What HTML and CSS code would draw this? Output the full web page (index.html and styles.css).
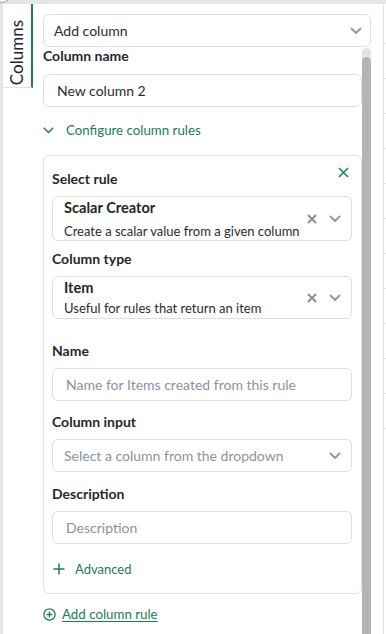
FILE: index.html
```html
<!DOCTYPE html>
<html>
<head>
    <title>Columns</title>
    <link rel="stylesheet" href="styles.css">
</head>
<body>
    <div class="corner-dot"></div>
    <div class="app">
        <div class="tabs">
            <div class="tab"><span>Columns</span></div>
        </div>

        <div class="panel">
            <div class="select top-select">
                <span>Add column</span>
                <svg class="chev" width="12" height="8" viewBox="0 0 12 8"><polyline points="1.5,1.5 6,6 10.5,1.5"/></svg>
            </div>

            <div class="scroll">
                <div class="content">
                    <div class="label">Column name</div>
                    <div class="input">New column 2</div>

                    <div class="toggle">
                        <svg width="11" height="7" viewBox="0 0 11 7"><polyline points="0.8,0.8 5.5,5.5 10.2,0.8"/></svg>
                        <span>Configure column rules</span>
                    </div>

                    <div class="card">
                        <svg class="close" width="11" height="11" viewBox="0 0 11 11"><path d="M1 1L10 10M10 1L1 10"/></svg>

                        <div class="label">Select rule</div>
                        <div class="select rich rule">
                            <div class="value">
                                <strong>Scalar Creator</strong>
                                <span>Create a scalar value from a given column</span>
                            </div>
                            <svg class="clear" width="10" height="10" viewBox="0 0 10 10"><path d="M1 1L9 9M9 1L1 9"/></svg>
                            <svg class="chev" width="12" height="8" viewBox="0 0 12 8"><polyline points="1.5,1.5 6,6 10.5,1.5"/></svg>
                        </div>

                        <div class="label gap-sm">Column type</div>
                        <div class="select rich kind">
                            <div class="value">
                                <strong>Item</strong>
                                <span>Useful for rules that return an item</span>
                            </div>
                            <svg class="clear" width="10" height="10" viewBox="0 0 10 10"><path d="M1 1L9 9M9 1L1 9"/></svg>
                            <svg class="chev" width="12" height="8" viewBox="0 0 12 8"><polyline points="1.5,1.5 6,6 10.5,1.5"/></svg>
                        </div>

                        <div class="label gap-lg">Name</div>
                        <div class="input placeholder">Name for Items created from this rule</div>

                        <div class="label gap-md">Column input</div>
                        <div class="select placeholder">
                            <span>Select a column from the dropdown</span>
                            <svg class="chev" width="12" height="8" viewBox="0 0 12 8"><polyline points="1.5,1.5 6,6 10.5,1.5"/></svg>
                        </div>

                        <div class="label gap-md2">Description</div>
                        <div class="input placeholder">Description</div>

                        <div class="advanced">
                            <svg width="12" height="12" viewBox="0 0 12 12"><path d="M6 0.5V11.5M0.5 6H11.5"/></svg>
                            <span>Advanced</span>
                        </div>
                    </div>

                    <a class="add-rule" href="#">
                        <svg width="13" height="13" viewBox="0 0 13 13"><circle cx="6.5" cy="6.5" r="5.6"/><path d="M6.5 3.6V9.4M3.6 6.5H9.4"/></svg>
                        <span>Add column rule</span>
                    </a>
                </div>

                <div class="scrollbar"><div class="thumb"></div></div>
            </div>
        </div>

        <div class="edge">
            <div class="row first"></div>
            <div class="row"></div>
            <div class="row"></div>
            <div class="row"></div>
            <div class="row"></div>
            <div class="row"></div>
            <div class="row"></div>
            <div class="row"></div>
            <div class="row"></div>
            <div class="row"></div>
            <div class="row"></div>
            <div class="row"></div>
        </div>
    </div>
</body>
</html>
```

FILE: styles.css
```css
* { box-sizing: border-box; }
body { margin: 0; background: #e6e6e8; font-family: Lato, "Noto Sans", sans-serif; font-size: 14px; color: #2b2b2b; overflow: hidden; position: relative; }

/* edge of a round button that peeks in at the top left */
.corner-dot { position: absolute; left: -8px; top: -17px; width: 20px; height: 20px; border-radius: 50%; background: #fff; border: 1px solid #9a9a9a; }

.app { display: flex; margin: 4px 0 0 3px; height: 630px; background: #fff; }

.tabs { width: 30px; flex: none; }
.tab { height: 84px; border-right: 2px solid #1d7a5c; border-bottom: 1px solid #e0e0e0; display: flex; align-items: center; justify-content: center; padding-top: 14px; }
.tab span { writing-mode: vertical-rl; transform: rotate(180deg); font-size: 17px; color: #262626; margin-right: 2px; }

.panel { flex: 1; min-width: 0; padding: 10px 12px 0 10px; display: flex; flex-direction: column; }

.select, .input { border: 1px solid #dedede; border-radius: 6px; background: #fff; display: flex; align-items: center; height: 33px; }
.select { padding: 0 10px 0 11px; }
.select > span, .select .value { flex: 1; min-width: 0; }
.input { padding: 0 13px; }
.top-select { padding: 0 8px 0 10px; }
.placeholder { color: #8d929c; }

.chev { fill: none; stroke: #9a9a9a; stroke-width: 2; stroke-linecap: round; stroke-linejoin: round; }
.clear { fill: none; stroke: #8f8f8f; stroke-width: 2; margin-right: 12px; }

.scroll { flex: 1; display: flex; min-height: 0; overflow: hidden; }
.content { flex: 1; min-width: 0; }
.scrollbar { width: 9px; margin-top: 1px; background: #e3e3e3; border-radius: 5px 5px 0 0; padding-top: 9px; }
.thumb { height: 100%; background: #b4b4b4; border-radius: 5px 5px 0 0; }

.label { font-weight: 700; line-height: 18px; margin-bottom: 9px; color: #262730; }
.card .label { margin-bottom: 8px; }
.gap-sm { margin-top: 9px; }
.gap-md { margin-top: 12px; }
.gap-md2 { margin-top: 13px; }
.gap-lg { margin-top: 23px; }

.toggle, .advanced, .add-rule { display: flex; align-items: center; color: #1d7a5c; line-height: 20px; font-size: 13.3px; }
.toggle { margin-top: 13px; }
.toggle svg { fill: none; stroke: #1d7a5c; stroke-width: 1.4; margin-right: 12px; }

.card { position: relative; margin-top: 15px; border: 1px solid #e2e2e2; border-radius: 6px; padding: 14px 9px 14px 8px; }
.close { position: absolute; top: 11px; right: 12px; fill: none; stroke: #1d7a5c; stroke-width: 1.5; }

.rich .value { display: flex; flex-direction: column; }
.rich strong { font-weight: 700; font-size: 14.6px; line-height: 20px; color: #262626; }
.rich .value span { font-size: 13px; line-height: 20px; }
.rule { height: 45px; padding-top: 1px; }
.rule .value { gap: 3px; }
.kind { height: 43px; }
.card .select { padding-left: 11px; }
.card .input { padding-left: 13px; }

.advanced { margin-top: 15px; padding-left: 1px; font-size: 13px; }
.advanced svg { fill: none; stroke: #1d7a5c; stroke-width: 1.5; margin-right: 10px; }

.add-rule { margin-top: 10px; text-decoration: none; }
.add-rule span { text-decoration: underline; text-underline-offset: 2px; }
.add-rule svg { fill: none; stroke: #1d7a5c; stroke-width: 1.3; margin-right: 6px; }

.edge { width: 3px; flex: none; border-left: 1px solid #e2e2e2; }
.row { height: 35px; border-bottom: 1px solid #e4e4e4; }
.row.first { height: 40px; }
```
